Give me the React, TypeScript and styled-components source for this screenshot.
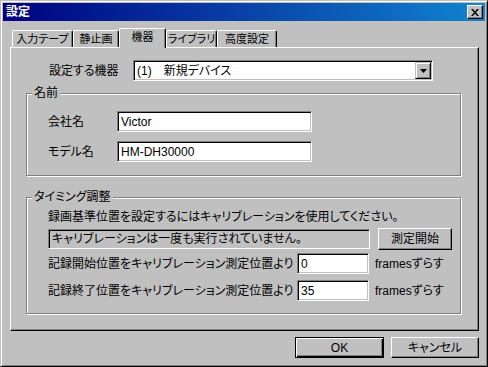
import React from 'react';
import styled, { createGlobalStyle } from 'styled-components';

const GlobalStyle = createGlobalStyle`
  html, body {
    margin: 0;
    padding: 0;
    background: #c0c0c0;
  }
  body {
    font-family: "Liberation Sans", "Noto Sans CJK JP", sans-serif;
    font-size: 12px;
    font-feature-settings: "palt";
    color: #000;
  }
  * {
    box-sizing: border-box;
  }
`;

const Window = styled.div`
  width: 488px;
  height: 367px;
  background: #c0c0c0;
  border: 1px solid;
  border-color: #c0c0c0 #000 #000 #c0c0c0;
  box-shadow: inset 1px 1px #fff, inset -1px -1px #808080;
  padding: 2px;
  display: flex;
  flex-direction: column;
`;

const TitleBar = styled.div`
  height: 18px;
  background: linear-gradient(to right, #000080, #1084d0);
  display: flex;
  align-items: center;
  justify-content: space-between;
  padding: 0 2px 0 3px;
`;

const Title = styled.span`
  color: #fff;
  font-weight: bold;
  line-height: 14px;
`;

const CloseButton = styled.div`
  width: 16px;
  height: 14px;
  background: #c0c0c0;
  border: 1px solid;
  border-color: #fff #000 #000 #fff;
  box-shadow: inset -1px -1px #808080;
  display: flex;
  align-items: center;
  justify-content: center;
`;

const Body = styled.div`
  flex: 1;
  display: flex;
  flex-direction: column;
  padding: 7px 6px 0 7px;
`;

const TabStrip = styled.div`
  height: 19px;
  display: flex;
  align-items: flex-end;
  padding-left: 2px;
`;

const Tab = styled.div<{ $w: number; $active?: boolean }>`
  width: ${(p) => p.$w}px;
  height: ${(p) => (p.$active ? 20 : 17)}px;
  margin-bottom: ${(p) => (p.$active ? -1 : 0)}px;
  position: relative;
  z-index: ${(p) => (p.$active ? 1 : 0)};
  background: #c0c0c0;
  border-top: 1px solid #fff;
  border-left: 1px solid #fff;
  border-right: 1px solid #000;
  border-radius: 2px 2px 0 0;
  box-shadow: inset -1px 0 #808080;
  display: flex;
  justify-content: center;
  padding-top: 1px;
  font-size: 11px;
  line-height: 14px;
  white-space: nowrap;
`;

const Panel = styled.div`
  height: 284px;
  border: 1px solid;
  border-color: #fff #000 #000 #fff;
  box-shadow: inset -1px -1px #808080;
  padding-top: 12px;
  display: flex;
  flex-direction: column;
`;

const ComboRow = styled.div`
  display: flex;
  align-items: center;
  padding-left: 38px;
`;

const Label = styled.span<{ $w: number }>`
  width: ${(p) => p.$w}px;
  flex: none;
  line-height: 14px;
  white-space: nowrap;
`;

const Combo = styled.div`
  width: 300px;
  height: 21px;
  background: #fff;
  border: 1px solid;
  border-color: #808080 #fff #fff #808080;
  box-shadow: inset 1px 1px #000, inset -1px -1px #c0c0c0;
  display: flex;
  align-items: center;
  justify-content: space-between;
  padding: 1px 1px 1px 3px;
`;

const ComboText = styled.span`
  line-height: 14px;
  white-space: nowrap;
`;

const DropButton = styled.div`
  width: 16px;
  height: 17px;
  background: #c0c0c0;
  border: 1px solid;
  border-color: #c0c0c0 #000 #000 #c0c0c0;
  box-shadow: inset 1px 1px #fff, inset -1px -1px #808080;
  display: flex;
  align-items: center;
  justify-content: center;
`;

const Group = styled.div<{ $top: number; $h: number }>`
  margin: ${(p) => p.$top}px 17px 0 15px;
  height: ${(p) => p.$h}px;
  border: 1px solid #808080;
  box-shadow: inset 1px 1px #fff, 1px 1px #fff;
  display: flex;
  flex-direction: column;
  padding-left: 21px;
`;

const Legend = styled.span`
  align-self: flex-start;
  margin: -8px 0 0 -16px;
  padding: 0 2px;
  background: #c0c0c0;
  line-height: 14px;
  white-space: nowrap;
`;

const Row = styled.div<{ $top: number }>`
  display: flex;
  align-items: center;
  margin-top: ${(p) => p.$top}px;
`;

const Edit = styled.input<{ $w: number }>`
  width: ${(p) => p.$w}px;
  height: 21px;
  margin: 0;
  background: #fff;
  border: 1px solid;
  border-color: #808080 #fff #fff #808080;
  box-shadow: inset 1px 1px #000, inset -1px -1px #c0c0c0;
  padding: 1px 2px 0 3px;
  font: inherit;
  font-feature-settings: "palt";
  color: #000;
  outline: none;
`;

const Note = styled.div<{ $top: number }>`
  margin-top: ${(p) => p.$top}px;
  line-height: 14px;
  white-space: nowrap;
`;

const StatusField = styled.div`
  width: 322px;
  height: 20px;
  background: #c0c0c0;
  border: 1px solid;
  border-color: #808080 #fff #fff #808080;
  box-shadow: inset 1px 1px #000, inset -1px -1px #c0c0c0;
  padding: 2px 0 0 3px;
  line-height: 14px;
  white-space: nowrap;
`;

const Button = styled.button<{ $w: number; $h: number; $default?: boolean; $left?: number }>`
  width: ${(p) => p.$w}px;
  height: ${(p) => p.$h}px;
  margin: 0 0 0 ${(p) => p.$left ?? 0}px;
  padding: 0;
  background: #c0c0c0;
  font: inherit;
  font-feature-settings: "palt";
  color: #000;
  border: 1px solid;
  border-color: ${(p) => (p.$default ? '#000' : '#fff #000 #000 #fff')};
  box-shadow: ${(p) =>
    p.$default
      ? 'inset 1px 1px #fff, inset -1px -1px #000, inset -2px -2px #808080'
      : 'inset -1px -1px #808080'};
  line-height: 14px;
`;

const Unit = styled.span`
  margin-left: 6px;
  line-height: 14px;
  white-space: nowrap;
`;

const Footer = styled.div`
  display: flex;
  justify-content: flex-end;
  gap: 7px;
  margin-top: 6px;
`;

const tabs = [
  { label: '入力テープ', w: 61 },
  { label: '静止画', w: 46 },
  { label: '機器', w: 47, active: true },
  { label: 'ライブラリ', w: 51 },
  { label: '高度設定', w: 60 },
];

export default function App() {
  return (
    <>
      <GlobalStyle />
      <Window>
        <TitleBar>
          <Title>設定</Title>
          <CloseButton>
            <svg width="8" height="7" viewBox="0 0 8 7">
              <path d="M0 0H2L4 2.5L6 0H8L5 3.5L8 7H6L4 4.5L2 7H0L3 3.5Z" fill="#000" />
            </svg>
          </CloseButton>
        </TitleBar>
        <Body>
          <TabStrip>
            {tabs.map((t) => (
              <Tab key={t.label} $w={t.w} $active={t.active}>
                {t.label}
              </Tab>
            ))}
          </TabStrip>
          <Panel>
            <ComboRow>
              <Label $w={84}>設定する機器</Label>
              <Combo>
                <ComboText>(1)　新規デバイス</ComboText>
                <DropButton>
                  <svg width="7" height="4" viewBox="0 0 7 4">
                    <polygon points="0,0 7,0 3.5,4" fill="#000" />
                  </svg>
                </DropButton>
              </Combo>
            </ComboRow>

            <Group $top={12} $h={83}>
              <Legend>名前</Legend>
              <Row $top={11}>
                <Label $w={69}>会社名</Label>
                <Edit $w={195} defaultValue="Victor" />
              </Row>
              <Row $top={9}>
                <Label $w={69}>モデル名</Label>
                <Edit $w={195} defaultValue="HM-DH30000" />
              </Row>
            </Group>

            <Group $top={21} $h={117}>
              <Legend>タイミング調整</Legend>
              <Note $top={6}>録画基準位置を設定するにはキャリブレーションを使用してください。</Note>
              <Row $top={4}>
                <StatusField>キャリブレーションは一度も実行されていません。</StatusField>
                <Button $w={74} $h={22} $left={8}>
                  測定開始
                </Button>
              </Row>
              <Row $top={3}>
                <Label $w={249}>記録開始位置をキャリブレーション測定位置より</Label>
                <Edit $w={72} defaultValue="0" />
                <Unit>framesずらす</Unit>
              </Row>
              <Row $top={6}>
                <Label $w={249}>記録終了位置をキャリブレーション測定位置より</Label>
                <Edit $w={72} defaultValue="35" />
                <Unit>framesずらす</Unit>
              </Row>
            </Group>
          </Panel>
          <Footer>
            <Button $w={89} $h={21} $default>
              OK
            </Button>
            <Button $w={88} $h={21}>
              キャンセル
            </Button>
          </Footer>
        </Body>
      </Window>
    </>
  );
}
